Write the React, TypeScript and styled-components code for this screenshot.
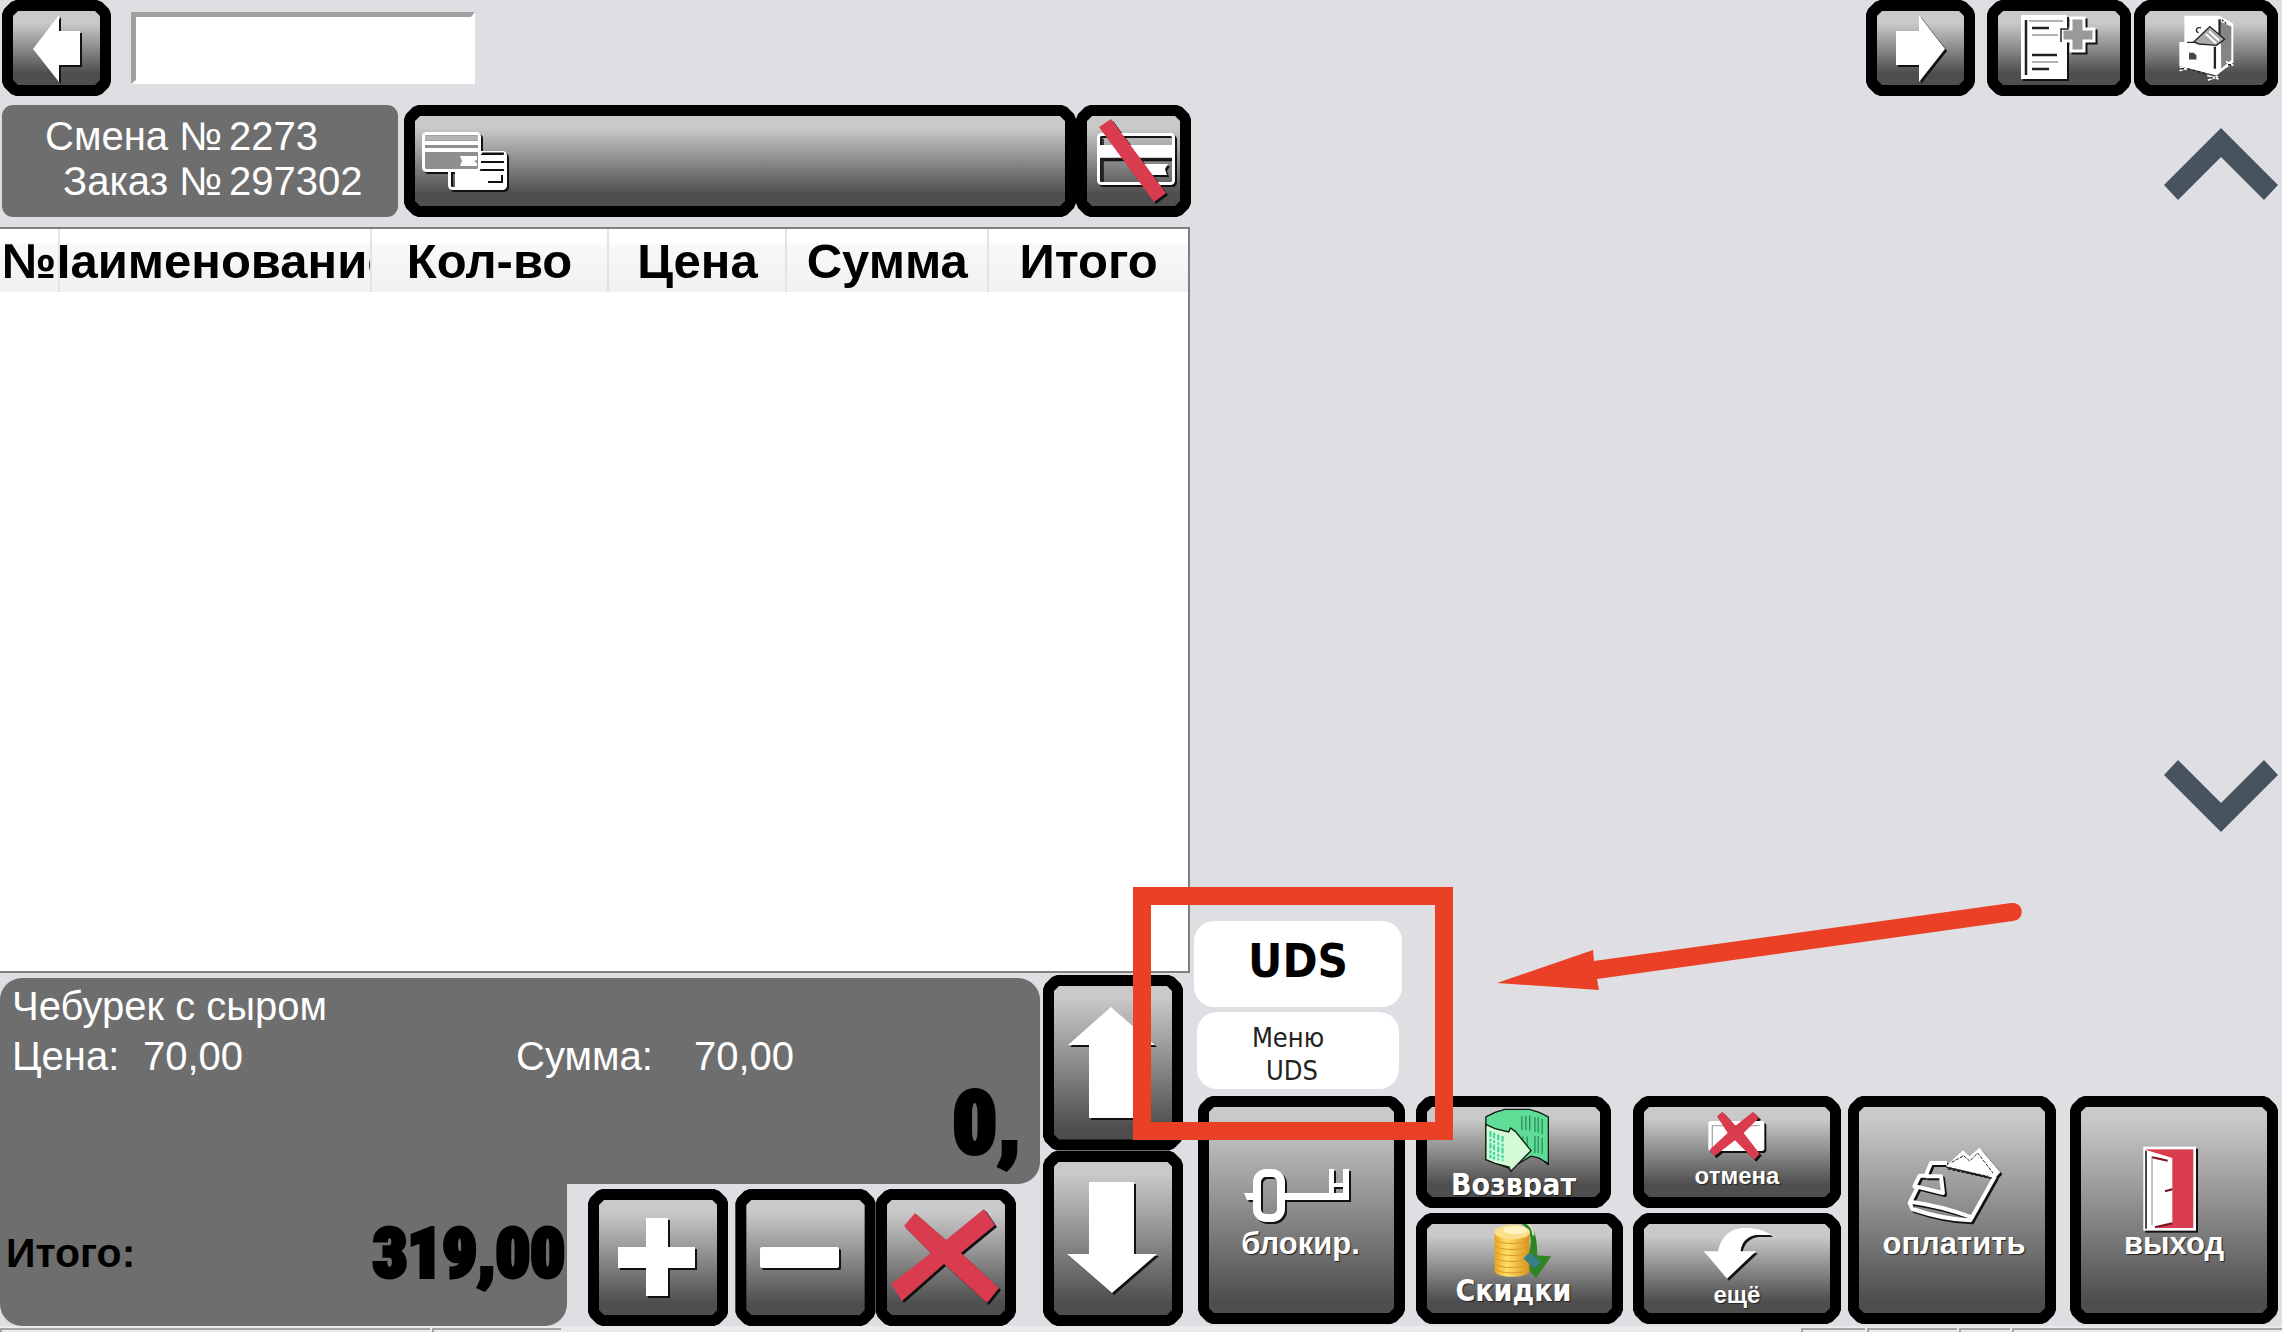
import React from 'react';
import styled, { createGlobalStyle } from 'styled-components';

const SANS = '"Liberation Sans", Arial, sans-serif';
const TAHOMA = '"DejaVu Sans Condensed", "DejaVu Sans", Tahoma, sans-serif';
const IMPACT = 'Impact, "Roboto Condensed", "Liberation Sans", sans-serif';

const GlobalStyle = createGlobalStyle`
  *, *::before, *::after { box-sizing: border-box; }
  body { margin: 0; background: #dfdee3; font-family: ${SANS}; }
  button { border: 0; margin: 0; padding: 0; background: none; font: inherit; cursor: pointer; }
  svg { display: block; flex: none; }
`;

const Page = styled.div`
  display: flex;
  flex-direction: column;
  min-height: 100vh;
  overflow: hidden;
`;

const Workspace = styled.main`
  flex: 1;
  display: grid;
  grid-template-columns: 1194fr 1088fr;
`;

const OrderSide = styled.section`
  display: flex;
  flex-direction: column;
  min-width: 0;
`;

const MenuSide = styled.section`
  display: flex;
  flex-direction: column;
  min-width: 0;
`;

/* ---------- bevelled key ---------- */

const KeyFrame = styled.button<{ $w?: number; $grow?: boolean }>`
  display: flex;
  flex: ${(p) => (p.$grow ? '1 1 0' : 'none')};
  width: ${(p) => (p.$w ? `${p.$w}px` : 'auto')};
  min-width: 0;
  padding: 11px;
  background: #000;
  clip-path: polygon(
    0 14px, 2px 9px, 9px 2px, 14px 0,
    calc(100% - 14px) 0, calc(100% - 9px) 2px, calc(100% - 2px) 9px, 100% 14px,
    100% calc(100% - 14px), calc(100% - 2px) calc(100% - 9px), calc(100% - 9px) calc(100% - 2px), calc(100% - 14px) 100%,
    14px 100%, 9px calc(100% - 2px), 2px calc(100% - 9px), 0 calc(100% - 14px)
  );
`;

const KeyFace = styled.span<{ $align?: string; $justify?: string; $pad?: string; $gap?: number }>`
  flex: 1;
  min-width: 0;
  display: flex;
  flex-direction: column;
  align-items: ${(p) => p.$align ?? 'center'};
  justify-content: ${(p) => p.$justify ?? 'center'};
  gap: ${(p) => p.$gap ?? 0}px;
  padding: ${(p) => p.$pad ?? '0'};
  background: linear-gradient(#c9c9c9, #c9c9c9 12px, #4e4e4e calc(100% - 12px));
  clip-path: polygon(
    5px 0, calc(100% - 5px) 0, 100% 5px, 100% calc(100% - 5px),
    calc(100% - 5px) 100%, 5px 100%, 0 calc(100% - 5px), 0 5px
  );
`;

const Glyph = styled.svg`
  filter: drop-shadow(2px 2px 0 #111);
`;

const KeyLabel = styled.span<{ $size: number; $family?: string }>`
  color: #fff;
  font: bold ${(p) => p.$size}px/24px ${(p) => p.$family ?? SANS};
  white-space: nowrap;
  text-shadow: 1px 1px 1px #222;
`;

/* ---------- order side ---------- */

const SearchRow = styled.div`
  display: flex;
  align-items: center;
  gap: 20px;
  height: 96px;
  padding-left: 2px;
  & > button { align-self: stretch; }
`;

const SearchBox = styled.input`
  width: 344px;
  height: 72px;
  padding: 0 12px;
  border: solid;
  border-width: 5px 4px 4px 5px;
  border-color: #a0a0a0 #fff #fff #a0a0a0;
  border-radius: 0;
  outline: 0;
  background: #fff;
  font: 40px/45px ${SANS};
`;

const InfoRow = styled.div`
  display: flex;
  height: 112px;
  margin: 9px 3px 10px 2px;
`;

const ShiftPanel = styled.dl`
  display: grid;
  grid-template-columns: 166px 39px auto;
  grid-auto-rows: 45px;
  column-gap: 11px;
  align-content: start;
  width: 396px;
  margin: 0 6px 0 0;
  padding-top: 9px;
  border-radius: 11px;
  background: #6e6e6e;
  color: #fff;
  font-size: 40px;
  line-height: 45px;
  white-space: nowrap;
  & > dt { text-align: right; }
  & > dd { margin: 0; }
`;

const TableBox = styled.div`
  flex: 1;
  margin-right: 4px;
  border: solid #808080;
  border-width: 2px 2px 2px 0;
  background: #fff;
`;

const OrderTable = styled.table`
  width: 100%;
  table-layout: fixed;
  border-collapse: collapse;
`;

const HeadCell = styled.th<{ $w: number }>`
  width: ${(p) => (p.$w / 1189) * 100}%;
  height: 63px;
  padding: 0;
  border-right: 2px solid #e2e3e5;
  background: linear-gradient(#fff 14px, #f7f9fa 14px, #f0f1f3);
  &:last-child { border-right: 0; }
`;

const HeadText = styled.span`
  display: flex;
  justify-content: center;
  overflow: hidden;
  font: bold 49px/56px ${SANS};
`;

const OrderFooter = styled.div`
  display: flex;
  gap: 3px;
  padding: 2px 11px 0 0;
  height: 353px;
`;

const FooterMain = styled.div`
  flex: 1;
  display: flex;
  flex-direction: column;
  padding-top: 3px;
`;

const ItemPanel = styled.div`
  height: 206px;
  display: flex;
  flex-direction: column;
  padding: 3px 19px 0 12px;
  border-radius: 22px 22px 22px 0;
  background: #6e6e6e;
  color: #fff;
  font-size: 40px;
  line-height: 50px;
`;

const ItemPrices = styled.div`
  display: grid;
  grid-template-columns: 131px 373px 178px auto;
`;

const Amount = styled.output<{ $size: number }>`
  color: #000;
  font: 900 ${(p) => p.$size}px/84px ${IMPACT};
  -webkit-text-stroke: 4px #000;
  text-align: right;
`;

const TotalRow = styled.div`
  flex: 1;
  display: flex;
`;

const TotalPanel = styled.div`
  width: 567px;
  margin-right: 21px;
  display: flex;
  align-items: center;
  justify-content: space-between;
  padding: 0 2px 3px 6px;
  border-radius: 0 0 22px 22px;
  background: #6e6e6e;
  color: #000;
  font: bold 41px/45px ${SANS};
`;

const QuantityKeys = styled.div`
  flex: 1;
  display: flex;
  margin: 5px 24px 0 0;
  & > button:first-child { margin-right: 7px; }
`;

const MoveKeys = styled.div`
  display: flex;
  flex-direction: column;
  width: 140px;
`;

/* ---------- menu side ---------- */

const MenuBar = styled.div`
  display: flex;
  justify-content: flex-end;
  gap: 3px;
  height: 96px;
  padding-right: 4px;
  & > button:first-child { margin-right: 9px; }
`;

const MenuArea = styled.div`
  flex: 1;
  display: flex;
  flex-direction: column;
  justify-content: space-between;
  align-items: flex-end;
  padding: 32px 4px 89px 0;
`;

const ActionGrid = styled.div`
  position: relative;
  display: flex;
  align-items: flex-end;
  height: 405px;
  padding: 0 4px 2px 0;
`;

const ActionColumn = styled.div<{ $share?: number; $lead?: number }>`
  flex: ${(p) => p.$share ?? 208} 1 0;
  display: flex;
  flex-direction: column;
  gap: 5px;
  margin-left: ${(p) => p.$lead ?? 0}px;
`;

const Action = styled(KeyFrame)<{ $h: number; $inset?: string }>`
  height: ${(p) => p.$h}px;
  margin: ${(p) => p.$inset ?? '0'};
`;

const UdsKey = styled.button`
  height: 86px;
  margin-right: 3px;
  border-radius: 20px;
  background: #fff;
  color: #000;
  font: bold 47px/52px ${TAHOMA};
  padding-bottom: 6px;
`;

const UdsMenuKey = styled.button`
  height: 77px;
  margin: 0 6px 2px 3px;
  padding: 7px 20px 0 0;
  border-radius: 20px;
  background: #fff;
  color: #222;
  font: 27px/33px ${TAHOMA};
  white-space: pre;
`;

const Highlight = styled.div`
  position: absolute;
  left: -61px;
  top: -34px;
  width: 320px;
  height: 253px;
  border: 18px solid #ea4025;
  pointer-events: none;
`;

const Pointer = styled.svg`
  position: absolute;
  left: 303px;
  top: -18px;
  pointer-events: none;
`;

/* ---------- status bar ---------- */

const StatusBar = styled.footer`
  display: grid;
  grid-template-columns: 431fr 129fr 1237fr 64fr 91fr 51fr 270fr;
  column-gap: 2px;
  height: 6px;
  padding-top: 2px;
  background: #ebebec;
`;

const StatusCell = styled.span<{ $flat?: boolean }>`
  border: solid #a3a3a3;
  border-width: ${(p) => (p.$flat ? '0' : '2px 0 0 2px')};
`;

/* ---------- drawings ---------- */

const BackIcon = () => (
  <Glyph width="47" height="67" viewBox="0 0 47 67" overflow="visible">
    <path fill="#fff" d="M0 34 26 0V16H47V50H26V67Z" />
  </Glyph>
);

const ForwardIcon = () => (
  <Glyph width="49" height="67" viewBox="0 0 49 67">
    <path fill="#fff" d="M0 16H23V0L49 34 23 67V50H0Z" />
  </Glyph>
);

const CardsIcon = () => (
  <Glyph width="86" height="59" viewBox="0 0 86 59">
    <rect x="27.500" y="20.500" width="56" height="36" rx="3" fill="none" stroke="#fff" strokeWidth="3" />
    <path fill="#fff" d="M59 23H82V29H59ZM59 31H82V37H59ZM33 39H82V55H33Z" />
    <path d="M60 21.500H82M66 50H80V43" stroke="#111" strokeWidth="2" fill="none" />
    <rect x="1.500" y="1.500" width="56" height="37" rx="3" fill="#8f8f8f" stroke="#fff" strokeWidth="3" />
    <path fill="#fff" d="M3 9H56V13H3ZM3 16H56V20H3ZM38 24H55V28L52 29 55 31V34H38L40 29Z" />
    <path d="M3 6H56" stroke="#b4b4b4" strokeWidth="5" />
  </Glyph>
);

const NoCardIcon = () => (
  <Glyph width="79" height="84" viewBox="0 0 79 84">
    <rect x="1.500" y="15.500" width="75" height="49" rx="3" fill="none" stroke="#fff" strokeWidth="3" />
    <path fill="#fff" d="M3 26H75V39H3ZM46 45H71L68 50 70 56H50Z" />
    <path d="M4 25V18M4 62V39.500H75" stroke="#222" strokeWidth="1.500" fill="none" />
    <path fill="#da3c4f" d="M2 8 14 0 69 74 57 83Z" />
  </Glyph>
);

const NewDocIcon = () => (
  <Glyph width="76" height="66" viewBox="0 0 76 66">
    <path fill="#fff" d="M0 0H46V64H0Z" />
    <path d="M5 5V60M11 13H28M11 40H36M11 54H28" stroke="#222" strokeWidth="2.500" />
    <path d="M8 6H42M11 20H37M11 47H37" stroke="#999" strokeWidth="1.500" />
    <path d="M50 3H63V14H73V26H63V36H50V26H41V14H50Z" fill="#999" stroke="#fff" strokeWidth="3" />
    <path d="M47 2V14H40V27" fill="none" stroke="#222" strokeWidth="1.500" />
  </Glyph>
);

const SafeIcon = () => (
  <svg width="55" height="66" viewBox="24 46 164 196">
    <path fill="#fff" d="M40 48H145L186 72V186L136 226 25 198V126H40Z" />
    <path fill="#858585" d="M148 66 180 80V180L150 206Z" />
    <path d="M145 58V130M131 140V206" stroke="#222" strokeWidth="7" />
    <path d="M152 60 166 72" stroke="#222" strokeWidth="4" strokeDasharray="6 5" />
    <path fill="#aaa" stroke="#222" strokeWidth="4" d="M68 126 116 80 160 118 136 136 84 132Z" />
    <path d="M104 102 134 130M114 94 144 122" stroke="#fff" strokeWidth="6" />
    <path d="M48 127H72M90 84C74 80 72 96 82 98" stroke="#222" strokeWidth="4" fill="none" />
    <path fill="#444" d="M54 158H68L76 166V178H54Z" />
    <path d="M26 200 48 208M26 212 46 204M108 226 142 236M110 240 140 228M164 184 186 196M164 202 186 184" stroke="#fff" strokeWidth="5" />
    <path d="M50 206 108 222M30 206H42M116 233H134M170 194H182" stroke="#222" strokeWidth="4" strokeDasharray="9 6" />
  </svg>
);

const ChevronIcon = ({ down = false }: { down?: boolean }) => (
  <svg width="114" height="73" viewBox="0 0 114 73">
    <path fill="#47535c" d={down ? 'M57 73 114 16 100 1 57 44 14 1 0 16Z' : 'M57 0 114 57 100 72 57 29 14 72 0 57Z'} />
  </svg>
);

const UpIcon = () => (
  <Glyph width="90" height="112" viewBox="0 0 90 112">
    <path fill="#fff" d="M43 0 87 38H67V111H21V38H0Z" />
  </Glyph>
);

const DownIcon = () => (
  <Glyph width="92" height="112" viewBox="0 0 92 112">
    <path fill="#fff" d="M22 0H67V72H90L45 111 0 72H22Z" />
  </Glyph>
);

const PlusIcon = () => (
  <Glyph width="80" height="80" viewBox="0 0 80 80">
    <path fill="#fff" d="M28 0H50V29H77V50H50V78H28V50H0V29H28Z" />
  </Glyph>
);

const MinusIcon = () => (
  <Glyph width="90" height="24" viewBox="0 0 90 24">
    <rect width="79" height="21" rx="2" y="1" fill="#fff" />
  </Glyph>
);

const DeleteIcon = () => (
  <Glyph width="110" height="97" viewBox="0 0 110 97">
    <path fill="#da3c4f" d="M13 17 24 4 55 31 93 0 104 16 70 44 108 79 96 94 53 55 11 92 0 75 40 44Z" />
  </Glyph>
);

const LockKeyIcon = () => (
  <Glyph width="114" height="55" viewBox="0 0 114 55">
    <rect x="13" y="4" width="24" height="45" rx="9" fill="none" stroke="#fff" strokeWidth="8" />
    <path fill="#fff" d="M0 24H9V31H3ZM41 24H85V0H90V14H99V0H105V31H41ZM90 18V24H99V18Z" fillRule="evenodd" />
  </Glyph>
);

const RefundIcon = () => (
  <svg width="72" height="65" viewBox="1068 715 220 198">
    <path fill="#5fdc96" stroke="#0a1a10" strokeWidth="4" d="M1092 742 1120 728 1150 719H1225L1255 728 1283 742V885L1255 868 1230 862 1165 900 1092 872Z" />
    <path d="M1202 738V782M1214 738V782M1226 738V784M1242 742V788M1252 742V790M1264 748V795M1205 802V816M1218 802V828M1242 800V852M1252 800V852M1264 806V856" stroke="#2a8f5c" strokeWidth="4" />
    <path fill="#d3fbd6" stroke="#0a1a10" strokeWidth="4" d="M1092 765 1120 778 1162 788 1167 776 1182 786 1230 845 1180 896 1168 908 1163 895 1120 884 1092 872Z" />
    <path d="M1106 785V868M1117 790V872M1130 796V874M1143 800V876" stroke="#45d6a0" strokeWidth="7" strokeDasharray="18 5 9 4" />
    <path d="M1271 878 1285 888" stroke="#0a1a10" strokeWidth="6" />
  </svg>
);

const CoinsIcon = () => (
  <svg width="76" height="59" viewBox="1066 1054 228 176">
    <defs>
      <linearGradient id="gold" x1="0" x2="1">
        <stop offset="0" stopColor="#e8a521" />
        <stop offset="0.35" stopColor="#ffe06a" />
        <stop offset="1" stopColor="#d8931a" />
      </linearGradient>
    </defs>
    <path d="M1200 1056C1246 1068 1248 1104 1250 1160L1292 1162 1246 1228 1206 1180 1224 1150C1240 1110 1224 1076 1200 1064Z" fill="#2f8424" />
    <path d="M1200 1056C1226 1062 1238 1080 1238 1100" stroke="#d9e6c8" strokeWidth="6" fill="none" />
    <path d="M1122 1092V1208C1130 1228 1216 1230 1226 1208V1092Z" fill="url(#gold)" />
    <path d="M1122 1112C1134 1128 1214 1128 1226 1112M1122 1130C1134 1146 1214 1146 1226 1130M1122 1148C1134 1164 1214 1164 1226 1148M1122 1166C1134 1182 1214 1182 1226 1166M1122 1184C1134 1200 1214 1200 1226 1184M1122 1200C1134 1216 1214 1216 1226 1200" stroke="#d99a22" strokeWidth="3" fill="none" />
    <ellipse cx="1175" cy="1090" rx="53" ry="22" fill="#fbe08a" />
    <ellipse cx="1184" cy="1084" rx="36" ry="12" fill="#fff3c4" />
    <path d="M1208 1168 1228 1150 1262 1180 1240 1200Z" fill="#357f86" />
  </svg>
);

const CancelIcon = () => (
  <Glyph width="60" height="50" viewBox="922 94 180 150">
    <rect x="926" y="124" width="168" height="90" rx="8" fill="#fff" />
    <path d="M938 204V138H1080" stroke="#aaa" strokeWidth="4" fill="none" />
    <path fill="#da3c4f" d="M952 110 968 96 1008 138 1060 96 1078 114 1032 160 1080 222 1064 240 1006 182 944 230 930 210 984 160Z" />
  </Glyph>
);

const MoreIcon = () => (
  <Glyph width="69" height="53" viewBox="903 438 207 159">
    <path fill="#fff" d="M905 511H948C958 462 990 441 1030 441 1062 441 1088 448 1107 462H1062C1036 466 1018 484 1016 511H1062L975 593Z" />
  </Glyph>
);

const WalletIcon = () => (
  <Glyph width="94" height="77" viewBox="236 204 282 231">
    <path fill="#fff" d="M352 262 404 214 424 232 454 206 516 280 500 298Z" />
    <path d="M370 250 406 230 424 246 448 222 494 282M352 264 480 292" stroke="#222" strokeWidth="3" strokeDasharray="10 4" fill="none" />
    <path fill="none" stroke="#fff" strokeWidth="12" strokeLinejoin="round" d="M356 252H308L292 290H274L258 322 266 328 244 372 252 390C306 408 362 422 426 424L500 292M292 292H338L344 342 262 322M246 368C320 378 380 396 428 414" />
  </Glyph>
);

const DoorIcon = () => (
  <Glyph width="62" height="86" viewBox="940 200 186 258">
    <rect x="945" y="206" width="150" height="244" fill="#da3c4f" stroke="#fff" strokeWidth="8" />
    <path fill="#fff" d="M949 212 1028 236V432L972 448H949Z" />
    <path d="M949 214V448" stroke="#222" strokeWidth="5" />
    <path d="M967 230V438" stroke="#888" strokeWidth="3" />
    <path d="M968 234 1014 244M1028 330 1006 336M976 444 1028 432" stroke="#7a1020" strokeWidth="6" fill="none" />
  </Glyph>
);

/* ---------- data ---------- */

const columns = [
  { title: '№', width: 59 },
  { title: 'Наименование', width: 312 },
  { title: 'Кол-во', width: 238 },
  { title: 'Цена', width: 178 },
  { title: 'Сумма', width: 202 },
  { title: 'Итого', width: 200 },
];

export default function App() {
  return (
    <Page>
      <GlobalStyle />
      <Workspace>
        <OrderSide>
          <SearchRow>
            <KeyFrame $w={109} aria-label="Назад"><KeyFace><BackIcon /></KeyFace></KeyFrame>
            <SearchBox type="text" aria-label="Поиск" />
          </SearchRow>

          <InfoRow>
            <ShiftPanel>
              <dt>Смена</dt><dd>№</dd><dd>2273</dd>
              <dt>Заказ</dt><dd>№</dd><dd>297302</dd>
            </ShiftPanel>
            <KeyFrame $grow aria-label="Карта клиента">
              <KeyFace $align="flex-start" $pad="0 0 0 7px"><CardsIcon /></KeyFace>
            </KeyFrame>
            <KeyFrame $w={115} aria-label="Убрать карту"><KeyFace $pad="0 0 0 5px"><NoCardIcon /></KeyFace></KeyFrame>
          </InfoRow>

          <TableBox>
            <OrderTable>
              <thead>
                <tr>
                  {columns.map((c) => (
                    <HeadCell key={c.title} $w={c.width} scope="col"><HeadText>{c.title}</HeadText></HeadCell>
                  ))}
                </tr>
              </thead>
              <tbody />
            </OrderTable>
          </TableBox>

          <OrderFooter>
            <FooterMain>
              <ItemPanel>
                <span>Чебурек с сыром</span>
                <ItemPrices>
                  <span>Цена:</span><span>70,00</span><span>Сумма:</span><span>70,00</span>
                </ItemPrices>
                <Amount $size={88}>0,</Amount>
              </ItemPanel>
              <TotalRow>
                <TotalPanel>
                  <span>Итого:</span>
                  <Amount $size={68}>319,00</Amount>
                </TotalPanel>
                <QuantityKeys>
                  <KeyFrame $grow aria-label="Добавить"><KeyFace><PlusIcon /></KeyFace></KeyFrame>
                  <KeyFrame $grow aria-label="Убавить"><KeyFace><MinusIcon /></KeyFace></KeyFrame>
                  <KeyFrame $grow aria-label="Удалить"><KeyFace><DeleteIcon /></KeyFace></KeyFrame>
                </QuantityKeys>
              </TotalRow>
            </FooterMain>
            <MoveKeys>
              <KeyFrame $grow aria-label="Вверх"><KeyFace><UpIcon /></KeyFace></KeyFrame>
              <KeyFrame $grow aria-label="Вниз"><KeyFace><DownIcon /></KeyFace></KeyFrame>
            </MoveKeys>
          </OrderFooter>
        </OrderSide>

        <MenuSide>
          <MenuBar>
            <KeyFrame $w={109} aria-label="Вперёд"><KeyFace><ForwardIcon /></KeyFace></KeyFrame>
            <KeyFrame $w={144} aria-label="Новый заказ"><KeyFace><NewDocIcon /></KeyFace></KeyFrame>
            <KeyFrame $w={144} aria-label="Касса"><KeyFace><SafeIcon /></KeyFace></KeyFrame>
          </MenuBar>

          <MenuArea>
            <button aria-label="Прокрутить вверх"><ChevronIcon /></button>
            <button aria-label="Прокрутить вниз"><ChevronIcon down /></button>
          </MenuArea>

          <ActionGrid>
            <ActionColumn $share={211}>
              <UdsKey>UDS</UdsKey>
              <UdsMenuKey>{'Меню\n UDS'}</UdsMenuKey>
              <Action $h={228} $inset="0 0 0 4px">
                <KeyFace $justify="flex-end" $pad="0 2px 57px 0" $gap={8}>
                  <LockKeyIcon /><KeyLabel $size={31}>блокир.</KeyLabel>
                </KeyFace>
              </Action>
            </ActionColumn>
            <ActionColumn $share={207} $lead={11}>
              <Action $h={112} $inset="0 12px 0 0">
                <KeyFace $justify="flex-end" $pad="0"><RefundIcon /><KeyLabel $size={30} $family={TAHOMA}>Возврат</KeyLabel></KeyFace>
              </Action>
              <Action $h={111}>
                <KeyFace $justify="flex-end" $pad="0 12px 10px 0"><CoinsIcon /><KeyLabel $size={30} $family={TAHOMA}>Скидки</KeyLabel></KeyFace>
              </Action>
            </ActionColumn>
            <ActionColumn $lead={10}>
              <Action $h={112}>
                <KeyFace $justify="flex-end" $pad="0 0 9px" $gap={3}><CancelIcon /><KeyLabel $size={24}>отмена</KeyLabel></KeyFace>
              </Action>
              <Action $h={111}>
                <KeyFace $justify="flex-end" $pad="0 0 6px" $gap={3}><MoreIcon /><KeyLabel $size={24}>ещё</KeyLabel></KeyFace>
              </Action>
            </ActionColumn>
            <ActionColumn $lead={7}>
              <Action $h={228}>
                <KeyFace $justify="flex-end" $pad="0 0 57px 4px" $gap={8}><WalletIcon /><KeyLabel $size={31}>оплатить</KeyLabel></KeyFace>
              </Action>
            </ActionColumn>
            <ActionColumn $lead={14}>
              <Action $h={228}>
                <KeyFace $justify="flex-end" $pad="0 0 57px"><DoorIcon /><KeyLabel $size={31}>выход</KeyLabel></KeyFace>
              </Action>
            </ActionColumn>
            <Highlight />
            <Pointer width="526" height="88" viewBox="0 0 526 88" aria-hidden="true">
              <path fill="#ea4025" d="M0 80 96 47 97 58 514 0C528 -1 528 17 516 18L100 76 102 87Z" />
            </Pointer>
          </ActionGrid>
        </MenuSide>
      </Workspace>
      <StatusBar>
        <StatusCell />
        <StatusCell />
        <StatusCell $flat />
        <StatusCell />
        <StatusCell />
        <StatusCell />
        <StatusCell />
      </StatusBar>
    </Page>
  );
}
